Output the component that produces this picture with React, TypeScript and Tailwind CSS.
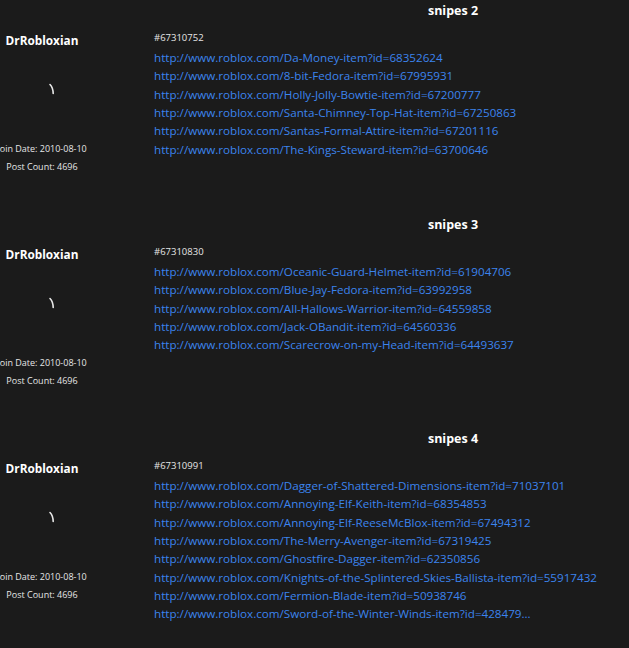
import React from "react";

type Post = { title: string; id: string; links: string[] };

const posts: Post[] = [
  {
    title: "snipes 2",
    id: "#67310752",
    links: [
      "http://www.roblox.com/Da-Money-item?id=68352624",
      "http://www.roblox.com/8-bit-Fedora-item?id=67995931",
      "http://www.roblox.com/Holly-Jolly-Bowtie-item?id=67200777",
      "http://www.roblox.com/Santa-Chimney-Top-Hat-item?id=67250863",
      "http://www.roblox.com/Santas-Formal-Attire-item?id=67201116",
      "http://www.roblox.com/The-Kings-Steward-item?id=63700646",
    ],
  },
  {
    title: "snipes 3",
    id: "#67310830",
    links: [
      "http://www.roblox.com/Oceanic-Guard-Helmet-item?id=61904706",
      "http://www.roblox.com/Blue-Jay-Fedora-item?id=63992958",
      "http://www.roblox.com/All-Hallows-Warrior-item?id=64559858",
      "http://www.roblox.com/Jack-OBandit-item?id=64560336",
      "http://www.roblox.com/Scarecrow-on-my-Head-item?id=64493637",
    ],
  },
  {
    title: "snipes 4",
    id: "#67310991",
    links: [
      "http://www.roblox.com/Dagger-of-Shattered-Dimensions-item?id=71037101",
      "http://www.roblox.com/Annoying-Elf-Keith-item?id=68354853",
      "http://www.roblox.com/Annoying-Elf-ReeseMcBlox-item?id=67494312",
      "http://www.roblox.com/The-Merry-Avenger-item?id=67319425",
      "http://www.roblox.com/Ghostfire-Dagger-item?id=62350856",
      "http://www.roblox.com/Knights-of-the-Splintered-Skies-Ballista-item?id=55917432",
      "http://www.roblox.com/Fermion-Blade-item?id=50938746",
      "http://www.roblox.com/Sword-of-the-Winter-Winds-item?id=428479...",
    ],
  },
];

function Spinner() {
  return (
    <svg width="10" height="12" viewBox="0 0 10 12" className="block">
      <path d="M2 1.5 Q5 4.5 5.2 10.5" stroke="#e8e8e8" strokeWidth="1.6" fill="none" strokeLinecap="round" />
    </svg>
  );
}

function PostBlock({ post }: { post: Post }) {
  return (
    <div className="flex flex-col h-[214px]">
      <div className="flex">
        <div className="w-[154px] shrink-0" />
        <div className="w-[598px] shrink-0 text-center text-[12.5px] font-bold text-white leading-[18px] pt-[2px]">
          {post.title}
        </div>
      </div>
      <div className="flex mt-[8px]">
        <div className="w-[84px] shrink-0 flex flex-col items-center">
          <div className="text-[11.8px] font-bold text-white leading-[18px] whitespace-nowrap mt-[3px]">DrRobloxian</div>
          <div className="mt-[34px] ml-[22px]">
            <Spinner />
          </div>
          <div className="mt-[45px] text-[9px] leading-[18px] text-[#e6e6e6] whitespace-nowrap">Join Date: 2010-08-10</div>
          <div className="text-[9px] leading-[18px] text-[#e6e6e6] whitespace-nowrap">Post Count: 4696</div>
        </div>
        <div className="w-[70px] shrink-0" />
        <div className="flex flex-col pt-[2px]">
          <div className="text-[9.5px] leading-[16px] text-[#e6e6e6] whitespace-nowrap">{post.id}</div>
          <div className="mt-[3px] flex flex-col">
            {post.links.map((l) => (
              <a key={l} className="text-[11.65px] leading-[18.35px] text-[#3b84ee] whitespace-nowrap">
                {l}
              </a>
            ))}
          </div>
        </div>
      </div>
    </div>
  );
}

export default function App() {
  return (
    <div
      className="w-[629px] h-[648px] overflow-hidden bg-[#1b1b1b]"
      style={{ fontFamily: '"Open Sans", "Noto Sans", sans-serif' }}
    >
      {posts.map((p) => (
        <PostBlock key={p.id} post={p} />
      ))}
    </div>
  );
}
